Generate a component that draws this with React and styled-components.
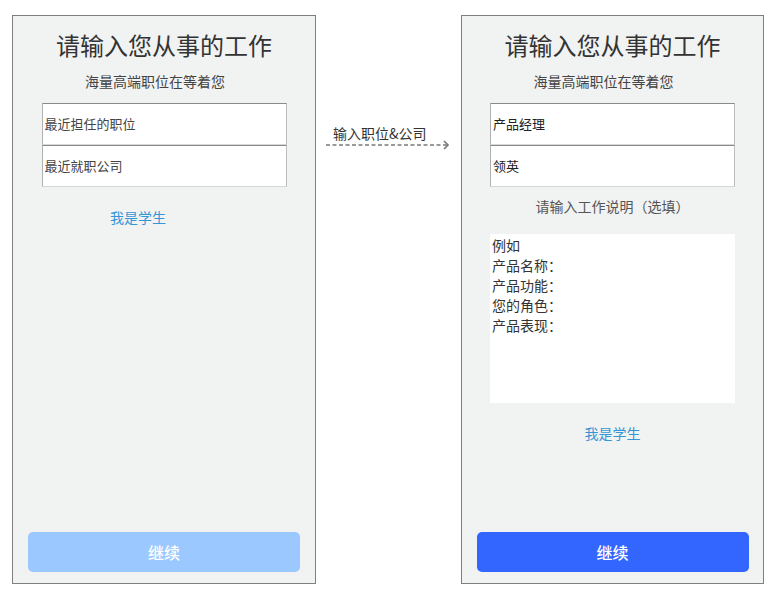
import React from 'react';
import styled, { createGlobalStyle } from 'styled-components';

const GlobalStyle = createGlobalStyle`
  body {
    margin: 0;
    background: #ffffff;
    font-family: "Noto Sans CJK SC", "Noto Sans", sans-serif;
  }
`;

const Page = styled.div`
  display: flex;
  align-items: flex-start;
  padding: 15px 0 0 12px;
`;

const Panel = styled.div`
  box-sizing: border-box;
  width: ${({ w }) => w || 304}px;
  height: 569px;
  border: 1px solid #7f7f7f;
  background: #f1f2f2;
  display: flex;
  flex-direction: column;
  align-items: center;
`;

const Title = styled.h1`
  margin: 14px 0 0;
  font-size: 24px;
  line-height: 30px;
  font-weight: 400;
  color: #333;
`;

const Subtitle = styled.p`
  margin: 11px 18px 0 0;
  font-size: 14px;
  line-height: 20px;
  color: #444;
`;

const Fields = styled.div`
  margin-top: 12px;
  width: 245px;
  display: flex;
  flex-direction: column;
`;

const Field = styled.input`
  box-sizing: border-box;
  width: 100%;
  height: 42px;
  margin: 0;
  padding: 0 2px 1px;
  border: 1px solid;
  border-color: #8a8a8a #bdbdbd #d6d6d6 #b0b0b0;
  border-radius: 0;
  background: #fff;
  font-family: "Noto Sans CJK SC", "Noto Sans", sans-serif;
  font-size: 13px;
  color: #222;
  outline: none;

  &::placeholder {
    color: #444;
  }
`;

const Hint = styled.p`
  margin: 9px 0 0;
  font-size: 14px;
  line-height: 20px;
  color: #555;
`;

const Note = styled.div`
  box-sizing: border-box;
  margin-top: 18px;
  width: 245px;
  height: 169px;
  padding: 1px 2px;
  background: #fff;
  font-size: 14px;
  line-height: 20px;
  color: #333;
  white-space: pre-line;
`;

const StudentLink = styled.a`
  margin: ${({ top }) => top}px ${({ shift }) => shift || 0}px 0 0;
  font-size: 14px;
  line-height: 20px;
  color: #3596d6;
  text-decoration: none;
  cursor: pointer;
`;

const NextButton = styled.button`
  margin: auto 0 11px;
  width: 272px;
  height: 40px;
  border: none;
  border-radius: 5px;
  background: ${({ disabled }) => (disabled ? '#9bc9ff' : '#3366ff')};
  color: #fff;
  font-family: "Noto Sans CJK SC", "Noto Sans", sans-serif;
  font-size: 16px;
  font-weight: 500;
  cursor: pointer;
`;

const Step = styled.div`
  box-sizing: border-box;
  width: 145px;
  padding: 109px 0 0 10px;
  display: flex;
  flex-direction: column;
`;

const StepLabel = styled.span`
  margin-left: 7px;
  font-size: 14px;
  line-height: 18px;
  color: #333;
`;

const DashedArrow = () => (
  <svg width="126" height="12" viewBox="0 0 126 12" style={{ display: 'block', marginTop: -3 }}>
    <line x1="0" y1="6" x2="121" y2="6" stroke="#7a7a7a" strokeWidth="1.6" strokeDasharray="4 2.5" />
    <polyline points="118,2 122,6 118,10" fill="none" stroke="#7a7a7a" strokeWidth="1.7" />
  </svg>
);

export default function App() {
  return (
    <>
      <GlobalStyle />
      <Page>
        <Panel>
          <Title>请输入您从事的工作</Title>
          <Subtitle>海量高端职位在等着您</Subtitle>
          <Fields>
            <Field placeholder="最近担任的职位" />
            <Field placeholder="最近就职公司" />
          </Fields>
          <StudentLink top={20} shift={52}>我是学生</StudentLink>
          <NextButton disabled>继续</NextButton>
        </Panel>

        <Step>
          <StepLabel>输入职位&amp;公司</StepLabel>
          <DashedArrow />
        </Step>

        <Panel w={303}>
          <Title>请输入您从事的工作</Title>
          <Subtitle>海量高端职位在等着您</Subtitle>
          <Fields>
            <Field defaultValue="产品经理" />
            <Field defaultValue="领英" />
          </Fields>
          <Hint>请输入工作说明（选填）</Hint>
          <Note>{'例如\n产品名称：\n产品功能：\n您的角色：\n产品表现：'}</Note>
          <StudentLink top={20}>我是学生</StudentLink>
          <NextButton>继续</NextButton>
        </Panel>
      </Page>
    </>
  );
}
